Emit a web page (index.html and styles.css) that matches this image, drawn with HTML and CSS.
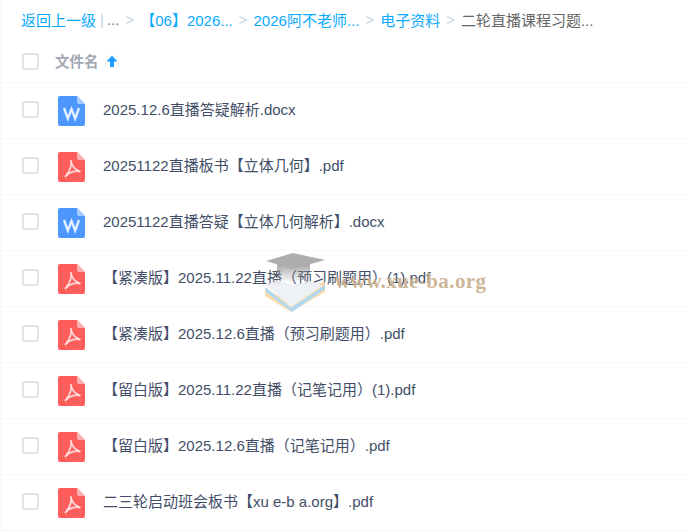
FILE: index.html
```html
<!DOCTYPE html>
<html lang="zh-CN">
  <head>
    <meta charset="UTF-8" />
    <title>文件列表</title>
    <link rel="stylesheet" href="styles.css">
  </head>
  <body>
    <svg class="sprites" width="0" height="0">
      <symbol id="icon-word" viewBox="0 0 27 30">
        <path d="M2 0H19L27 8V28a2 2 0 0 1-2 2H2a2 2 0 0 1-2-2V2a2 2 0 0 1 2-2z" fill="#4d97ff"/>
        <path d="M19 0L27 8H21a2 2 0 0 1-2-2z" fill="#a9cbff"/>
        <path d="M6 12L9.800 22.500L13.500 13L17.200 22.500L21 12" fill="none" stroke="#e3eeff" stroke-width="2.400"/>
      </symbol>
      <symbol id="icon-pdf" viewBox="0 0 27 30">
        <path d="M2 0H19L27 8V28a2 2 0 0 1-2 2H2a2 2 0 0 1-2-2V2a2 2 0 0 1 2-2z" fill="#ff5c5c"/>
        <path d="M19 0L27 8H21a2 2 0 0 1-2-2z" fill="#ffb0b0"/>
        <path d="M13 9C13.600 13.500 16 17.500 22.500 19.500C17.500 18.500 10.500 20 7.500 24.500M13 9C14 14 11 20 7.500 24.500" fill="none" stroke="#ffdcdc" stroke-width="1.800" stroke-linecap="round"/>
      </symbol>
    </svg>

    <div class="file-panel">
      <div class="crumbs">
        <a href="#">返回上一级</a>
        <span class="bar">|</span>
        <span class="dots">...</span>
        <span class="sep">&gt;</span>
        <a href="#">【06】2026...</a>
        <span class="sep">&gt;</span>
        <a href="#">2026阿不老师...</a>
        <span class="sep">&gt;</span>
        <a href="#">电子资料</a>
        <span class="sep">&gt;</span>
        <span class="current">二轮直播课程习题...</span>
      </div>

      <div class="list-head">
        <span class="check"></span>
        <span class="head-name">文件名</span>
        <svg class="sort-arrow" width="12" height="12" viewBox="0 0 12 12">
          <path d="M6 0.500L11.500 6.500H8V12H4V6.500H0.500z" fill="#1e9fff"/>
        </svg>
      </div>

      <ul class="file-list">
        <li class="file-row">
          <span class="check"></span>
          <svg class="file-icon"><use href="#icon-word"/></svg>
          <span class="file-name">2025.12.6直播答疑解析.docx</span>
        </li>
        <li class="file-row">
          <span class="check"></span>
          <svg class="file-icon"><use href="#icon-pdf"/></svg>
          <span class="file-name">20251122直播板书【立体几何】.pdf</span>
        </li>
        <li class="file-row">
          <span class="check"></span>
          <svg class="file-icon"><use href="#icon-word"/></svg>
          <span class="file-name">20251122直播答疑【立体几何解析】.docx</span>
        </li>
        <li class="file-row">
          <span class="check"></span>
          <svg class="file-icon"><use href="#icon-pdf"/></svg>
          <span class="file-name">【紧凑版】2025.11.22直播（预习刷题用）(1).pdf</span>
        </li>
        <li class="file-row">
          <span class="check"></span>
          <svg class="file-icon"><use href="#icon-pdf"/></svg>
          <span class="file-name">【紧凑版】2025.12.6直播（预习刷题用）.pdf</span>
        </li>
        <li class="file-row">
          <span class="check"></span>
          <svg class="file-icon"><use href="#icon-pdf"/></svg>
          <span class="file-name">【留白版】2025.11.22直播（记笔记用）(1).pdf</span>
        </li>
        <li class="file-row">
          <span class="check"></span>
          <svg class="file-icon"><use href="#icon-pdf"/></svg>
          <span class="file-name">【留白版】2025.12.6直播（记笔记用）.pdf</span>
        </li>
        <li class="file-row">
          <span class="check"></span>
          <svg class="file-icon"><use href="#icon-pdf"/></svg>
          <span class="file-name">二三轮启动班会板书【xu e-b a.org】.pdf</span>
        </li>
      </ul>
    </div>

    <div class="watermark">
      <svg width="64" height="62" viewBox="0 0 64 62">
        <defs>
          <linearGradient id="capFade" x1="0" y1="0" x2="0" y2="1">
            <stop offset="0" stop-color="#6e6e6e"/>
            <stop offset="1" stop-color="#9a9a9a" stop-opacity="0.1"/>
          </linearGradient>
        </defs>
        <path d="M1 36V44L27 60L61 40V30L44 32L27 52z" fill="#fcd9a0"/>
        <path d="M1 35L27 56L61 33V37L28 60L2 40z" fill="#a5d5f2"/>
        <path d="M2 33L14 28L30 33L46 29L59 33L27 55z" fill="#eef1f5"/>
        <path d="M13 12V26C20 31 38 31 46 24V11L29 6z" fill="url(#capFade)"/>
        <path d="M2 9L29 1L61 8L29 17z" fill="#a6a6a6"/>
      </svg>
      <span class="watermark-url">www.xue-ba.org</span>
    </div>
  </body>
</html>
```

FILE: styles.css
```css
* {
  box-sizing: border-box;
}
html,
body {
  height: 100%;
}
body {
  margin: 0;
  position: relative;
  overflow: hidden;
  background-color: #fff;
  font-family: "Liberation Sans", "Noto Sans CJK SC", sans-serif;
  font-size: 15px;
  color: #424e67;
}
.sprites {
  position: absolute;
}
.file-panel {
  border-left: 2px solid #f9f9fa;
}
.crumbs {
  height: 38px;
  margin-bottom: 4px;
  padding: 0 0 0 19px;
  display: flex;
  align-items: center;
  white-space: nowrap;
  color: #666;
}
.crumbs a {
  color: #09aaff;
  text-decoration: none;
}
.bar {
  margin-left: 4px;
  color: #c4d3e6;
}
.dots {
  margin-left: 3px;
  color: #777;
}
.sep {
  margin: 0 6px;
  color: #c4d3e6;
}
.current {
  color: #666;
}
.list-head {
  height: 41px;
  padding-left: 20px;
  display: flex;
  align-items: center;
  border-bottom: 1px solid #f4f6fa;
}
.list-head .check {
  margin-bottom: 2px;
}
.head-name {
  margin-left: 16px;
  margin-bottom: 4px;
  font-weight: 700;
  font-size: 14.500px;
  color: #a1a7b3;
}
.sort-arrow {
  margin-left: 7px;
  margin-bottom: 3px;
}
.check {
  width: 17px;
  height: 17px;
  flex: none;
  border: 2px solid #dfe3ea;
  border-radius: 3px;
  background-color: #fff;
}
.file-list {
  list-style: none;
  margin: 0;
  padding: 0;
}
.file-row {
  height: 56px;
  padding-left: 20px;
  display: flex;
  align-items: center;
  border-bottom: 1px solid #f4f6fa;
}
.file-row .check {
  margin-bottom: 2px;
}
.file-icon {
  width: 27px;
  height: 30px;
  flex: none;
  margin-left: 19px;
}
.file-name {
  margin-left: 18px;
  margin-bottom: 4px;
  white-space: nowrap;
}
.watermark {
  position: absolute;
  left: 264px;
  top: 252px;
  display: flex;
  align-items: center;
  opacity: 0.9;
  pointer-events: none;
}
.watermark-url {
  margin-left: 7px;
  margin-bottom: 4px;
  font-family: "Liberation Serif", serif;
  font-weight: 700;
  font-size: 21px;
  letter-spacing: 0.4px;
  color: #c9b08e;
}
```
